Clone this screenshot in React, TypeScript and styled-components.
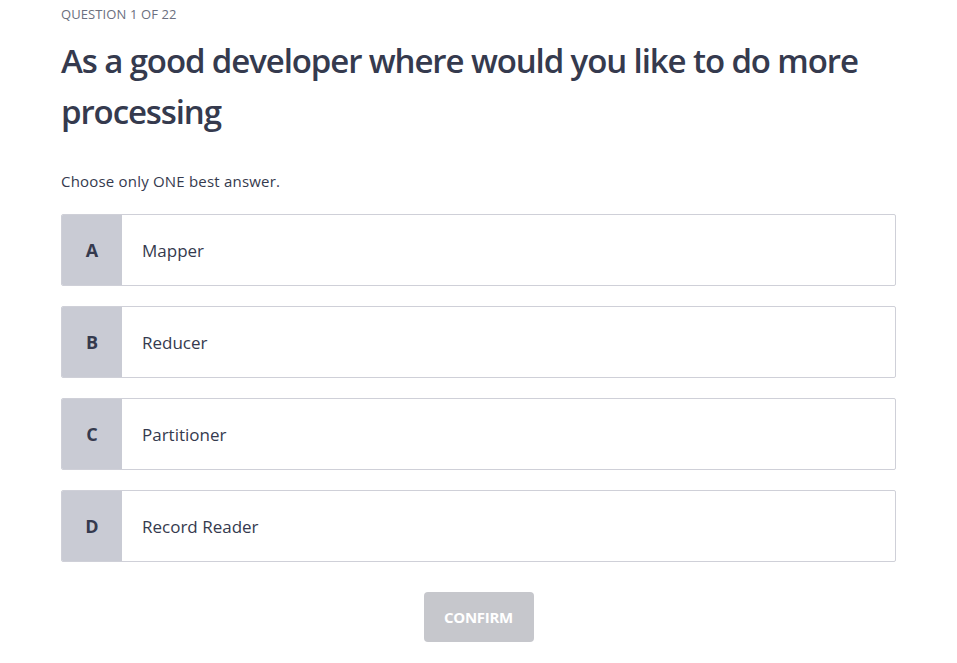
import React from "react";
import styled, { createGlobalStyle } from "styled-components";

const Global = createGlobalStyle`
  html, body { margin: 0; padding: 0; background: #ffffff; }
  body { font-family: "Open Sans", "Noto Sans", Arial, sans-serif; }
`;

const Page = styled.div`
  padding: 5px 61px 0 61px;
  width: 835px;
  display: flex;
  flex-direction: column;
`;

const Counter = styled.div`
  font-size: 13px;
  color: #6b6f80;
  line-height: 18px;
  letter-spacing: 0.1px;
`;

const Question = styled.h1`
  margin: 12px 0 0 0;
  font-size: 33px;
  line-height: 51px;
  font-weight: 600;
  color: #353a4e;
  letter-spacing: -1.1px;
`;

const Hint = styled.p`
  margin: 34px 0 0 0;
  font-size: 15px;
  line-height: 20px;
  color: #353a4e;
  letter-spacing: 0.2px;
`;

const Options = styled.div`
  margin-top: 23px;
  display: flex;
  flex-direction: column;
  gap: 20px;
`;

const Option = styled.button`
  all: unset;
  box-sizing: border-box;
  display: flex;
  height: 72px;
  width: 835px;
  border: 1px solid #cfd0d8;
  border-radius: 2px;
  background: #ffffff;
  overflow: hidden;
  cursor: pointer;
`;

const Letter = styled.div`
  width: 60px;
  flex: none;
  background: #c9cbd4;
  display: flex;
  align-items: center;
  justify-content: center;
  font-size: 18px;
  font-weight: 700;
  color: #353a4e;
`;

const Label = styled.div`
  display: flex;
  align-items: center;
  padding-left: 20px;
  font-size: 17px;
  color: #353a4e;
  letter-spacing: 0px;
`;

const Footer = styled.div`
  display: flex;
  justify-content: center;
  margin-top: 30px;
`;

const Confirm = styled.button`
  all: unset;
  width: 110px;
  height: 50px;
  border-radius: 4px;
  background: #c6c7cc;
  color: #ffffff;
  font-size: 15px;
  font-weight: 700;
  display: flex;
  align-items: center;
  justify-content: center;
  letter-spacing: -0.3px;
`;

const options = [
  ["A", "Mapper"],
  ["B", "Reducer"],
  ["C", "Partitioner"],
  ["D", "Record Reader"],
];

export default function App() {
  return (
    <>
      <Global />
      <Page>
        <Counter>QUESTION 1 OF 22</Counter>
        <Question>As a good developer where would you like to do more processing</Question>
        <Hint>Choose only ONE best answer.</Hint>
        <Options>
          {options.map(([l, t]) => (
            <Option key={l}>
              <Letter>{l}</Letter>
              <Label>{t}</Label>
            </Option>
          ))}
        </Options>
        <Footer>
          <Confirm>CONFIRM</Confirm>
        </Footer>
      </Page>
    </>
  );
}
